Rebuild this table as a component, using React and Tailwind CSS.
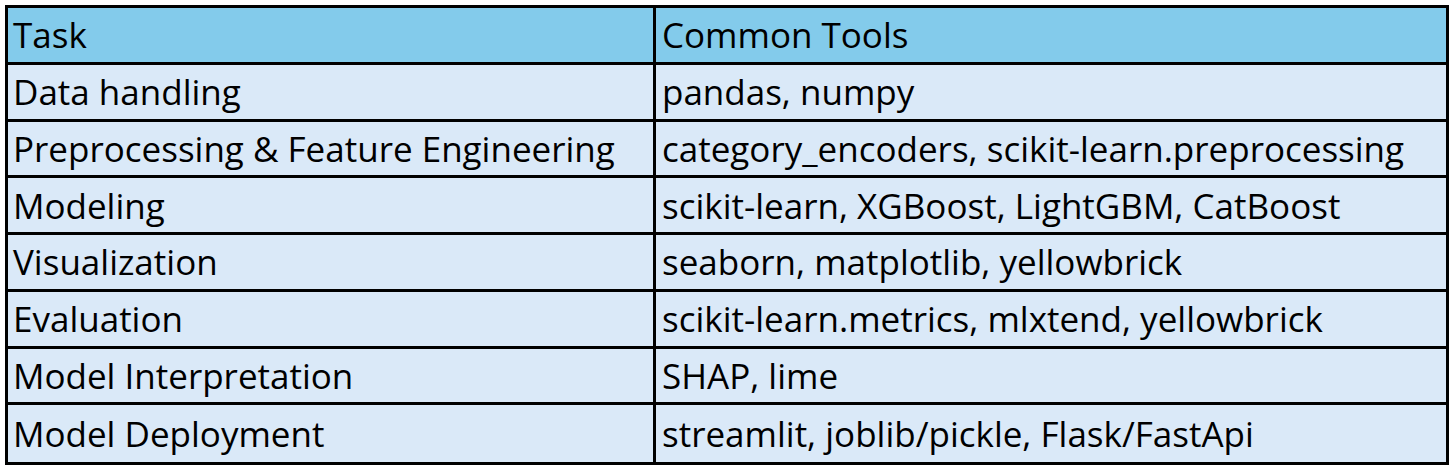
export default function App() {
  const rows = [
    ["Data handling", "pandas, numpy"],
    ["Preprocessing & Feature Engineering", "category_encoders, scikit-learn.preprocessing"],
    ["Modeling", "scikit-learn, XGBoost, LightGBM, CatBoost"],
    ["Visualization", "seaborn, matplotlib, yellowbrick"],
    ["Evaluation", "scikit-learn.metrics, mlxtend, yellowbrick"],
    ["Model Interpretation", "SHAP, lime"],
    ["Model Deployment", "streamlit, joblib/pickle, Flask/FastApi"],
  ];
  return (
    <div className="w-[1456px] h-[466px] bg-white pl-[5px] pt-[5px]" style={{ fontFamily: '"Open Sans", "Noto Sans", sans-serif' }}>
      <div className="w-[1444px] border-[3px] border-black flex flex-col text-black text-[35px] leading-none">
        <div className="flex h-[56.75px] border-b-[3px] border-black bg-[#83cbeb]">
          <div className="w-[648px] shrink-0 border-r-[3px] border-black flex items-center pl-[5px] whitespace-nowrap">Task</div>
          <div className="flex-1 flex items-center pl-[6px] whitespace-nowrap">Common Tools</div>
        </div>
        {rows.map((r, i) => (
          <div key={i} className={`flex h-[56.75px] bg-[#dae9f8] ${i < rows.length - 1 ? "border-b-[3px] border-black" : ""}`}>
            <div className="w-[648px] shrink-0 border-r-[3px] border-black flex items-center pl-[5px] whitespace-nowrap">{r[0]}</div>
            <div className="flex-1 flex items-center pl-[6px] whitespace-nowrap">{r[1]}</div>
          </div>
        ))}
      </div>
    </div>
  );
}
